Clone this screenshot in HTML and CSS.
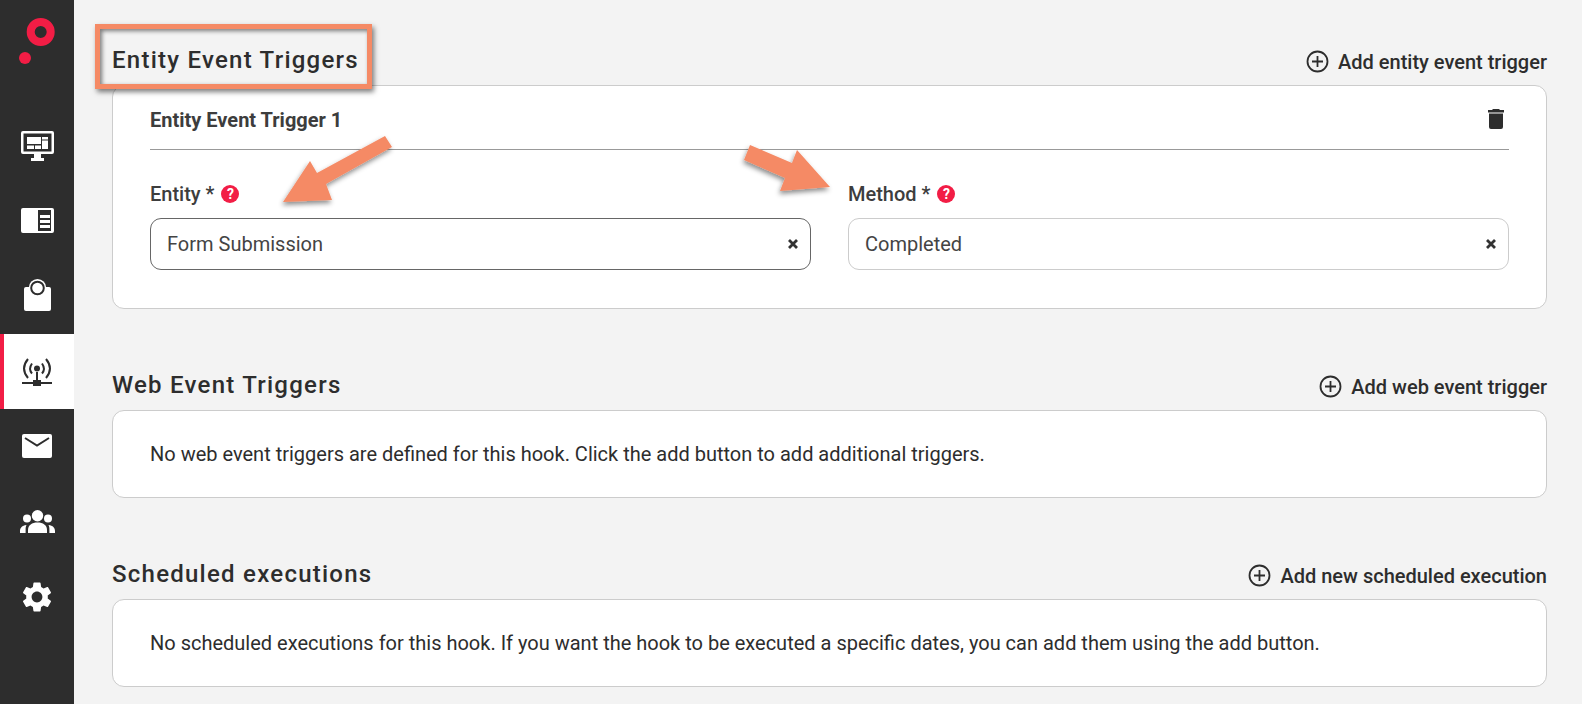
FILE: index.html
```html
<!DOCTYPE html>
<html lang="en">
<head>
    <meta charset="UTF-8">
    <title>Hook triggers</title>
    <link rel="stylesheet" href="styles.css">
</head>
<body>
    <div class="sidebar">
        <div class="logo">
            <svg width="74" height="108" viewBox="0 0 74 108">
                <circle cx="40.700" cy="32" r="10" fill="none" stroke="#f21d45" stroke-width="8"/>
                <circle cx="25" cy="58" r="6" fill="#f21d45"/>
            </svg>
        </div>
        <div class="nav-item">
            <svg width="33" height="30" viewBox="0 0 33 30">
                <path fill="#fff" fill-rule="evenodd" d="M2 0h29a2 2 0 0 1 2 2v19a2 2 0 0 1-2 2H20v4h3v3H10v-3h3v-4H2a2 2 0 0 1-2-2V2a2 2 0 0 1 2-2zM2.500 2.500v18h28v-18z"/>
                <path fill="#fff" d="M6 6h14v7H6zM21 6h6v2.500h-6zM21 9.500h6V18h-6zM6 14.500h7V18H6zM14 14.500h6V18h-6z"/>
            </svg>
        </div>
        <div class="nav-item">
            <svg width="33" height="25" viewBox="0 0 33 25">
                <path fill="#fff" fill-rule="evenodd" d="M2 0h29a2 2 0 0 1 2 2v21a2 2 0 0 1-2 2H2a2 2 0 0 1-2-2V2a2 2 0 0 1 2-2zM17 2v21h13V2z"/>
                <path fill="#fff" d="M19 7h10v3H19zM19 12h10v3H19zM19 17h10v3H19z"/>
            </svg>
        </div>
        <div class="nav-item bag">
            <svg width="27" height="32" viewBox="0 0 27 32">
                <circle cx="13.500" cy="8.700" r="8.700" fill="#fff"/>
                <path fill="#fff" d="M2 8h23a2 2 0 0 1 2 2v20a2 2 0 0 1-2 2H2a2 2 0 0 1-2-2V10a2 2 0 0 1 2-2z"/>
                <circle cx="13.500" cy="9" r="6.300" fill="none" stroke="#2d2d2d" stroke-width="2"/>
            </svg>
        </div>
        <div class="nav-item active">
            <svg width="30" height="29" viewBox="0 0 30 29">
                <g fill="none" stroke="#2d2d2d" stroke-width="2">
                    <path d="M6 2c-5 6-5 13 0 19M24 2c5 6 5 13 0 19"/>
                    <path d="M10 6.500c-2.500 3.500-2.500 7 0 10M20 6.500c2.500 3.500 2.500 7 0 10"/>
                </g>
                <circle cx="15" cy="11.500" r="3" fill="#2d2d2d"/>
                <path fill="#2d2d2d" d="M14 15h2v9h-2zM0 25h11v-2h8v2h11v2H19v2h-8v-2H0z"/>
            </svg>
        </div>
        <div class="nav-item">
            <svg width="30" height="24" viewBox="0 0 30 24">
                <path fill="#fff" d="M2 0h26a2 2 0 0 1 2 2v20a2 2 0 0 1-2 2H2a2 2 0 0 1-2-2V2a2 2 0 0 1 2-2z"/>
                <path fill="none" stroke="#2d2d2d" stroke-width="2" d="M3 4l12 7.500L27 4"/>
            </svg>
        </div>
        <div class="nav-item">
            <svg width="35" height="23" viewBox="0 0 35 23">
                <g fill="#fff">
                    <circle cx="17.500" cy="5.700" r="5.700"/>
                    <circle cx="7" cy="8.500" r="4"/>
                    <circle cx="28" cy="8.500" r="4"/>
                    <path d="M8 23v-3c0-5 4-7.500 9.500-7.500S27 15 27 20v3z"/>
                    <path d="M0 23v-2c0-3 2-5.500 6.500-6-.8 1.500-.9 3-.9 5v3zM35 23v-2c0-3-2-5.500-6.500-6 .8 1.500.9 3 .9 5v3z"/>
                </g>
            </svg>
        </div>
        <div class="nav-item">
            <svg width="30" height="30" viewBox="2 2 20 20">
                <path fill="#fff" d="M19.140 12.940c.040-.300.060-.610.060-.940 0-.320-.020-.640-.070-.940l2.030-1.580c.180-.140.230-.410.120-.610l-1.920-3.320c-.120-.220-.370-.290-.590-.220l-2.390.960c-.500-.380-1.030-.700-1.620-.940l-.360-2.540c-.040-.240-.240-.410-.480-.410h-3.840c-.240 0-.430.170-.470.410l-.360 2.540c-.590.240-1.130.570-1.620.940l-2.390-.960c-.220-.080-.470 0-.590.220L2.740 8.870c-.120.210-.080.470.120.610l2.030 1.580c-.050.300-.090.630-.090.940s.020.640.070.940l-2.030 1.580c-.180.140-.230.410-.120.610l1.920 3.320c.120.220.370.290.590.220l2.390-.960c.500.380 1.030.700 1.620.940l.360 2.540c.050.240.240.410.480.410h3.840c.240 0 .440-.170.470-.410l.360-2.540c.590-.240 1.130-.560 1.620-.940l2.390.960c.220.080.470 0 .590-.220l1.920-3.320c.120-.220.070-.470-.120-.610l-2.010-1.580zM12 15.600c-1.980 0-3.600-1.620-3.600-3.600s1.620-3.600 3.600-3.600 3.600 1.620 3.600 3.600-1.620 3.600-3.600 3.600z"/>
            </svg>
        </div>
    </div>

    <div class="main-content">
        <div class="section">
            <div class="section-head">
                <div class="section-title">Entity Event Triggers</div>
                <div class="add-button">
                    <svg width="23" height="23" viewBox="0 0 23 23"><circle cx="11.500" cy="11.500" r="10" fill="none" stroke="#2d2d2d" stroke-width="1.800"/><path fill="none" stroke="#2d2d2d" stroke-width="1.800" d="M11.500 6v11M6 11.500h11"/></svg>
                    Add entity event trigger
                </div>
            </div>
            <div class="card">
                <div class="card-head">
                    <div class="card-title">Entity Event Trigger 1</div>
                    <svg width="16" height="20" viewBox="0 0 16 20"><path fill="#2d2d2d" d="M5 0h6l1 1h4v2.500H0V1h4zM1 4.500h14V18a2 2 0 0 1-2 2H3a2 2 0 0 1-2-2z"/></svg>
                </div>
                <div class="fields">
                    <div class="field">
                        <div class="field-label">Entity * <span class="help">?</span></div>
                        <div class="select focused">
                            <span>Form Submission</span>
                            <svg width="10" height="10" viewBox="0 0 10 10"><path fill="none" stroke="#333" stroke-width="2.800" d="M1 1l8 8M9 1l-8 8"/></svg>
                        </div>
                    </div>
                    <div class="field">
                        <div class="field-label">Method * <span class="help">?</span></div>
                        <div class="select">
                            <span>Completed</span>
                            <svg width="10" height="10" viewBox="0 0 10 10"><path fill="none" stroke="#333" stroke-width="2.800" d="M1 1l8 8M9 1l-8 8"/></svg>
                        </div>
                    </div>
                </div>
            </div>
        </div>

        <div class="section">
            <div class="section-head">
                <div class="section-title">Web Event Triggers</div>
                <div class="add-button">
                    <svg width="23" height="23" viewBox="0 0 23 23"><circle cx="11.500" cy="11.500" r="10" fill="none" stroke="#2d2d2d" stroke-width="1.800"/><path fill="none" stroke="#2d2d2d" stroke-width="1.800" d="M11.500 6v11M6 11.500h11"/></svg>
                    Add web event trigger
                </div>
            </div>
            <div class="card card-empty">No web event triggers are defined for this hook. Click the add button to add additional triggers.</div>
        </div>

        <div class="section">
            <div class="section-head">
                <div class="section-title">Scheduled executions</div>
                <div class="add-button">
                    <svg width="23" height="23" viewBox="0 0 23 23"><circle cx="11.500" cy="11.500" r="10" fill="none" stroke="#2d2d2d" stroke-width="1.800"/><path fill="none" stroke="#2d2d2d" stroke-width="1.800" d="M11.500 6v11M6 11.500h11"/></svg>
                    Add new scheduled execution
                </div>
            </div>
            <div class="card card-empty">No scheduled executions for this hook. If you want the hook to be executed a specific dates, you can add them using the add button.</div>
        </div>
    </div>

    <!-- screenshot annotations drawn over the page -->
    <div class="highlight"></div>
    <svg class="arrows" width="1582" height="704" viewBox="0 0 1582 704">
        <defs>
            <filter id="arrow-shadow" x="-30%" y="-30%" width="160%" height="160%">
                <feDropShadow dx="-1" dy="3" stdDeviation="2.500" flood-color="#000" flood-opacity="0.45"/>
            </filter>
        </defs>
        <g fill="#f58a65" filter="url(#arrow-shadow)">
            <polygon points="385,136 392,147 326,184 332,200 283,202 310,161 317,173"/>
            <polygon points="750,145 792,163 797,150 830,187 780,191 785,178 744,160"/>
        </g>
    </svg>
</body>
</html>
```

FILE: styles.css
```css
html, body {
    height: 100%;
}

body {
    font-family: 'Roboto', sans-serif;
    margin: 0;
    display: flex;
    overflow: hidden;
    background: #f3f3f3;
    color: #2d2d2d;
}

.sidebar {
    width: 74px;
    flex-shrink: 0;
    background: #2d2d2d;
}

.logo {
    height: 108px;
}

.logo svg {
    display: block;
}

.nav-item {
    height: 75.2px;
    display: flex;
    align-items: center;
    justify-content: center;
}

.nav-item.bag svg {
    margin-top: -2px;
}

.nav-item.active {
    background: #fff;
    box-shadow: inset 4px 0 0 #f21d45;
}

.main-content {
    flex-grow: 1;
    padding: 45px 35px 0 38px;
}

.section {
    margin-bottom: 61px;
}

.section-head {
    height: 30px;
    padding-bottom: 10px;
    display: flex;
    justify-content: space-between;
    align-items: center;
}

.section-title {
    font-size: 24px;
    font-weight: 500;
    letter-spacing: 1.25px;
}

.add-button {
    display: flex;
    align-items: center;
    gap: 9px;
    margin-top: 3px;
    font-size: 20px;
    font-weight: 500;
}

.card {
    background: #fff;
    border: 1px solid #ccc;
    border-radius: 12px;
    padding: 0 37px;
}

.card-empty {
    height: 86px;
    display: flex;
    align-items: center;
    font-size: 20px;
}

.card-head {
    height: 63px;
    border-bottom: 1px solid #999;
    display: flex;
    justify-content: space-between;
    align-items: center;
}

.card-head svg {
    margin-right: 5px;
    margin-top: 3px;
}

.card-title {
    font-size: 20px;
    font-weight: 700;
    color: #3d3d3d;
    margin-top: 5px;
}

.fields {
    display: flex;
    gap: 37px;
    padding: 30px 0 38px;
}

.field {
    flex: 1;
}

.field-label {
    display: flex;
    align-items: center;
    gap: 7px;
    height: 28px;
    margin-bottom: 10px;
    font-size: 20px;
    font-weight: 500;
    color: #3d3d3d;
}

.help {
    width: 18px;
    height: 18px;
    border-radius: 50%;
    background: #f21d45;
    color: #fff;
    font-size: 14px;
    font-weight: 700;
    display: flex;
    align-items: center;
    justify-content: center;
}

.select {
    height: 50px;
    padding: 0 12px 0 16px;
    background: #fff;
    border: 1px solid #ccc;
    border-radius: 11px;
    display: flex;
    justify-content: space-between;
    align-items: center;
    font-size: 20px;
    color: #444;
}

.select.focused {
    border-color: #666;
}

.highlight {
    position: absolute;
    left: 95px;
    top: 24px;
    width: 267px;
    height: 55px;
    border: 5px solid #f58a65;
    box-shadow: 2px 3px 5px rgba(0, 0, 0, 0.5), inset 2px 2px 4px rgba(0, 0, 0, 0.5);
}

.arrows {
    position: absolute;
    left: 0;
    top: 0;
    pointer-events: none;
}
```
